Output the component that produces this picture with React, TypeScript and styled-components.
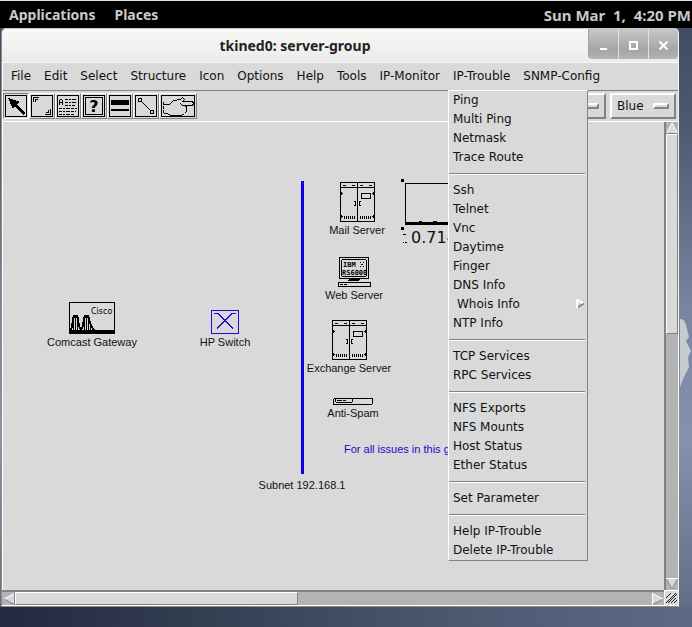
import React from "react";
import styled, { createGlobalStyle, css } from "styled-components";

const GlobalStyle = createGlobalStyle`
  * { box-sizing: border-box; }
  body { margin: 0; background: #4a566e; }
  button, select { font: inherit; color: inherit; margin: 0; }
`;

const face = "#d9d9d9";
const light = "#ffffff";
const shade = "#828282";
const trough = "#b3b3b3";

const raised = css`
  border-style: solid;
  border-color: ${light} ${shade} ${shade} ${light};
`;

/* ---------- desktop ---------- */

const Desktop = styled.div`
  position: relative;
  display: flex;
  flex-direction: column;
  min-height: 100vh;
  overflow: hidden;
  border-top: 1px solid #dfe3e3;
  background:
    linear-gradient(90deg, #23293f 0%, #343f52 30%, #4b5870 65%, #5c6a84 100%) bottom / 100% 20px no-repeat,
    linear-gradient(180deg, #3c485e 0%, #4d5a72 20%, #7886a2 50%, #8592ad 70%, #5c6a84 100%);
  color: #111;
  font-family: "DejaVu Sans", sans-serif;
  font-size: 12px;
`;

const Wallpaper = styled.svg`
  position: absolute;
  top: 312px;
  right: 0;
`;

const TopPanel = styled.header`
  display: flex;
  align-items: center;
  gap: 19px;
  height: 27px;
  padding: 0 1px 0 9px;
  background: #000;
  color: #c9c9c9;
  font: 700 14px/20px "Noto Sans", "Open Sans", sans-serif;
`;

const PanelButton = styled.button`
  padding: 0;
  border: 0;
  background: none;
`;

const Clock = styled.time`
  margin-left: auto;
  font-size: 15px;
  white-space: pre;
`;

/* ---------- window ---------- */

const Window = styled.main`
  position: relative;
  flex: 1;
  display: flex;
  flex-direction: column;
  margin: 0 13px 20px 1px;
  border: 1px solid #8d8d8d;
  border-top: 0;
  border-right-color: #f4f4f4;
  border-radius: 5px 5px 0 0;
  background: ${face};
`;

const TitleBar = styled.div`
  display: flex;
  align-items: flex-start;
  height: 35px;
  border-top: 1px solid #c9c9c9;
  border-bottom: 1px solid #f8f8f8;
  border-radius: 5px 5px 0 0;
  background: linear-gradient(#f8f8f7, #ebebea);
`;

const Title = styled.h1`
  flex: 1;
  margin: 0;
  color: #222;
  font: 700 14px/34px "Noto Sans", "Open Sans", sans-serif;
  text-align: center;
`;

const WindowButtons = styled.div`
  display: flex;
  height: 30px;
  overflow: hidden;
  border-radius: 0 4px 4px 4px;
`;

const WindowButton = styled.button`
  display: grid;
  place-items: center;
  width: 30px;
  padding: 2px 0 0;
  border: 0;
  border-left: 1px solid #e2e2e2;
  background: linear-gradient(#c8c8c8, #a5a5a5 70%, #b4b4b4);

  &:first-child { border-left-color: #a2a2a2; }
`;

const MenuBar = styled.nav`
  display: flex;
  height: 28px;
  padding: 0 2px;
  border-left: 1px solid ${light};
  border-bottom: 1px solid ${shade};
`;

const MenuSlot = styled.div`
  position: relative;
`;

const MenuTitle = styled.button`
  height: 27px;
  padding: 0 7px 2px 6px;
  border: 0;
  background: none;
  white-space: nowrap;
`;

const Popup = styled.div`
  position: absolute;
  z-index: 2;
  top: 27px;
  left: 1px;
  width: 140px;
  border-width: 1px;
  ${raised}
  background: ${face};
`;

const Item = styled.button<{ $indent?: boolean }>`
  display: flex;
  align-items: center;
  justify-content: space-between;
  width: 100%;
  height: 19px;
  padding: 0 2px 2px ${(p) => (p.$indent ? 8 : 4)}px;
  border: 0;
  background: none;
  white-space: nowrap;
`;

const Separator = styled.hr`
  height: 2px;
  margin: 6px 2px 6px 0;
  border: 0;
  border-top: 1px solid ${shade};
  border-bottom: 1px solid ${light};
`;

/* ---------- toolbar ---------- */

const ToolBar = styled.div`
  display: flex;
  align-items: center;
  height: 31px;
  padding: 0 2px 0 0;
  border-left: 1px solid ${light};
  border-bottom: 1px solid ${light};
`;

const Tool = styled.button<{ $active?: boolean }>`
  display: block;
  padding: 1px;
  border: 1px solid;
  border-color: ${(p) =>
    p.$active ? `${shade} ${light} ${light} ${shade}` : `${light} ${shade} ${shade} ${light}`};
  background: ${face};

  svg { display: block; }
`;

const Choices = styled.div`
  display: flex;
  gap: 4px;
  margin-left: auto;
`;

const Choice = styled.label`
  position: relative;
  display: flex;
  align-items: center;
  width: 66px;
  height: 26px;
  padding: 0 5px;
  border-width: 2px;
  ${raised}
`;

const ChoiceSelect = styled.select`
  flex: 1;
  min-width: 0;
  padding: 0;
  border: 0;
  appearance: none;
  background: none;
`;

const Indicator = styled.span`
  width: 16px;
  height: 6px;
  border-width: 2px;
  ${raised}
  pointer-events: none;
`;

/* ---------- work area and scrollbars ---------- */

const WorkArea = styled.div`
  flex: 1;
  display: grid;
  grid-template: minmax(0, 1fr) 16px / minmax(0, 1fr) 14px;
`;

const Canvas = styled.section`
  position: relative;
  overflow: hidden;
  border-left: 1px solid ${light};
  font: 11px/13px "Liberation Sans", Arial, sans-serif;
`;

const Scroll = styled.div<{ $vertical?: boolean }>`
  display: flex;
  flex-direction: ${(p) => (p.$vertical ? "column" : "row")};
  border: 0 solid ${shade};
  ${(p) =>
    p.$vertical
      ? css`border-left-width: 2px;`
      : css`border-top-width: 2px; border-bottom: 1px solid ${light}; padding-left: 1px;`}
  background: ${trough};
`;

const Arrow = styled.button`
  display: block;
  flex: none;
  padding: 0;
  border: 0;
  background: none;

  svg { display: block; }
`;

const Track = styled.div<{ $vertical?: boolean }>`
  flex: 1;
  display: flex;
  flex-direction: ${(p) => (p.$vertical ? "column" : "row")};
`;

const Thumb = styled.div<{ $share: number }>`
  flex: 0 0 ${(p) => p.$share}%;
  border-width: 1px;
  ${raised}
  background: ${face};
`;

const Corner = styled.div`
  border: 1px solid ${light};
  border-width: 1px 0 1px 1px;
  background: ${face};

  svg { display: block; }
`;

const Node = styled.figure<{ $x: number; $y: number; $gap?: number }>`
  position: absolute;
  left: ${(p) => p.$x - 53}px;
  top: ${(p) => p.$y}px;
  display: flex;
  flex-direction: column;
  align-items: center;
  gap: ${(p) => p.$gap ?? 2}px;
  width: 100px;
  margin: 0;
  white-space: nowrap;

  svg { display: block; }
`;

const Bus = styled.div`
  width: 3px;
  height: 293px;
  background: #1200ea;
`;

const Note = styled.p`
  position: absolute;
  left: 341px;
  top: 321px;
  margin: 0;
  color: #2108cf;
  white-space: nowrap;
`;

const Chart = styled.div`
  position: absolute;
  left: 398px;
  top: 57px;
  font: 16px/16px "DejaVu Sans", sans-serif;

  svg { display: block; }
`;

const ChartValue = styled.div`
  display: flex;
  align-items: center;
  gap: 4px;
  padding-left: 2px;
`;

/* ---------- drawings ---------- */

type ArtProps = { w: number; h: number; color?: string; children: React.ReactNode };

const Art = ({ w, h, color = "#000", children }: ArtProps) => (
  <svg width={w} height={h} viewBox={`0 0 ${w} ${h}`} fill="none" stroke={color} shapeRendering="crispEdges" aria-hidden="true">
    {children}
  </svg>
);

const ToolArt = ({ w = 22, children }: { w?: number; children: React.ReactNode }) => (
  <Art w={w} h={22}>
    <rect x=".5" y=".5" width={w - 1} height="21" />
    {children}
  </Art>
);

const tools = [
  {
    name: "Select",
    art: (
      <ToolArt>
        <path d="M3 3L15 7L12 9L20 18L18 20L10 11L8 14Z" fill="#000" stroke="none" />
      </ToolArt>
    ),
  },
  {
    name: "Resize",
    art: (
      <ToolArt>
        <path d="M2.500 7V2.500H8M4.500 7V4.500H7M19.500 14V19.500H14M17.500 15V17.500H15" />
      </ToolArt>
    ),
  },
  {
    name: "Text",
    art: (
      <ToolArt>
        <path d="M2.500 10V5M5.500 10V5M3 4.500H5M3 7.500H5" />
        <path d="M8 4.500H19M8 7.500H20M8 10.500H18M2 13.500H20M2 16.500H19M2 19.500H18" strokeDasharray="3 1 2 1 4 1" />
      </ToolArt>
    ),
  },
  {
    name: "Icon",
    art: (
      <ToolArt>
        <rect x="2.5" y="2.500" width="17" height="17" />
        <text x="11" y="17" textAnchor="middle" fill="#000" stroke="none" fontFamily="DejaVu Sans, sans-serif" fontWeight="700" fontSize="16">?</text>
      </ToolArt>
    ),
  },
  {
    name: "Network",
    art: (
      <ToolArt>
        <path d="M2 5H20V10H2ZM2 14H20V16H2Z" fill="#000" stroke="none" />
      </ToolArt>
    ),
  },
  {
    name: "Link",
    art: (
      <ToolArt>
        <path d="M3.500 3.500H6.500V6.500H3.500ZM15.500 15.500H18.500V18.500H15.500ZM7 7L15 15" />
      </ToolArt>
    ),
  },
  {
    name: "Reference",
    art: (
      <ToolArt w={34}>
        <path d="M2.500 7V19" strokeDasharray="3 1" />
        <path d="M3 9.500H8.500L12.500 5.500L19.500 4.500L21.500 2.500L23.500 4.500L21.500 6.500H31.500L32.500 8.500L31.500 10.500H24.500L25.500 12.500V16.500L23.500 18.500L20.500 20.500H9.500L6.500 18.500H3M19.500 8.500L21.500 10.500H24.500" />
      </ToolArt>
    ),
  },
];

const GatewayArt = () => (
  <Art w={46} h={32}>
    <rect x=".5" y=".5" width="45" height="31" />
    <path d="M1 28H46V32H1Z" fill="#000" stroke="none" />
    <path d="M1 29L3 25L4 17L5 14H8L9 17L10 24L12 28L14 24L15 17L16 14H19L20 17L22 24L25 28" strokeWidth="2" />
    <path d="M4.500 18V28M6.500 15V28M8.500 18V28M15.500 17V28M17.500 15V28M19.500 18V28M21.500 24V28" />
    <text x="22" y="12" fill="#000" stroke="none" fontFamily="DejaVu Sans, sans-serif" fontSize="8">Cisco</text>
  </Art>
);

const SwitchArt = () => (
  <Art w={28} h={24} color="#2108dc">
    <rect x=".5" y=".5" width="27" height="23" />
    <path d="M3 3.500H7L22 18.500M25 3.500H21L6 18.500" />
  </Art>
);

const CabinetArt = () => (
  <Art w={35} h={40}>
    <path d="M.5 .5H34.500V39.500H.5ZM0 5.500H35M17.500 0V40" />
    <path d="M3 3.500H6M12 3.500H15M20 3.500H23M29 3.500H32" />
    <path d="M1 11.500H3M1 34.500H3M32 11.500H34M32 34.500H34M1.500 10V13M1.500 33V36M33.500 10V13M33.500 33V36" />
    <rect x="21.5" y="11.500" width="9" height="5" />
    <path d="M14 19.500H15.500V23.500H14M21 19.500H19.500V23.500H21" />
    <path d="M4 35.500H16M20 35.500H32" strokeWidth="3" strokeDasharray="1 1" />
  </Art>
);

const TerminalArt = () => (
  <Art w={33} h={30}>
    <path d="M1.500 .5H30.500V21.500H1.500ZM4.500 2.500H27.500L28.500 3.500V18.500L27.500 19.500H4.500L3.500 18.500V3.500Z" />
    <path d="M11 22.500H22M10 23.500H21M.5 25.500H32.500V29.500H.5ZM2 27.500H5M6 27.500H9" />
    <g fill="#000" stroke="none" fontFamily="DejaVu Sans Mono, monospace" fontWeight="700" fontSize="7">
      <text x="5" y="10">IBM</text>
      <text x="4" y="18">RS6000</text>
    </g>
    <path d="M22 5.500H23M25 5.500H26M23 7.500H25M22 9.500H23M25 9.500H26" />
  </Art>
);

const ApplianceArt = () => (
  <Art w={40} h={7}>
    <rect x=".5" y=".5" width="39" height="6" rx="1.5" />
    <path d="M2.500 1V3.500L3.500 4.500H18.500L19.500 3.500V1M4 2.500H9M10 2.500H13" />
  </Art>
);

const ChartArt = () => (
  <Art w={80} h={51}>
    <path d="M0 0H3V3H0ZM0 48H3V51H0ZM4 43H80V46H4ZM18 42H21V43H18ZM32 42H36V43H32Z" fill="#000" stroke="none" />
    <path d="M4.500 45V4.500H80" />
  </Art>
);

const turns = { left: 0, up: 90, right: 180, down: 270 };

const ArrowArt = ({ dir }: { dir: keyof typeof turns }) => {
  const flip = dir === "right" || dir === "down";
  return (
    <svg width="12" height="12" viewBox="0 0 12 12" aria-hidden="true">
      <g transform={`rotate(${turns[dir]} 6 6)`}>
        <path d="M0 6L12 0V12Z" fill={face} />
        <path d="M1 6L11.500 .5" stroke={flip ? shade : light} />
        <path d="M1 6L11.500 11.500" stroke={dir === "left" || dir === "down" ? shade : light} />
        <path d="M11.500 0V12" stroke={flip ? light : shade} />
      </g>
    </svg>
  );
};

const SubmenuArt = () => (
  <svg width="9" height="9" viewBox="0 0 9 9" aria-hidden="true">
    <path d="M0 0L9 4.500L0 9Z" fill={face} />
    <path d="M1 8.500L8 4.500" stroke={shade} strokeWidth="2" />
    <path d="M1 9V1L7 4" fill="none" stroke={light} strokeWidth="2" />
  </svg>
);

/* ---------- data ---------- */

const menus = ["File", "Edit", "Select", "Structure", "Icon", "Options", "Help", "Tools", "IP-Monitor", "IP-Trouble", "SNMP-Config"];

const troubleGroups = [
  ["Ping", "Multi Ping", "Netmask", "Trace Route"],
  ["Ssh", "Telnet", "Vnc", "Daytime", "Finger", "DNS Info", "Whois Info", "NTP Info"],
  ["TCP Services", "RPC Services"],
  ["NFS Exports", "NFS Mounts", "Host Status", "Ether Status"],
  ["Set Parameter"],
  ["Help IP-Trouble", "Delete IP-Trouble"],
];

const nodes = [
  { label: "Comcast Gateway", x: 92, y: 180, art: <GatewayArt /> },
  { label: "HP Switch", x: 225, y: 188, art: <SwitchArt /> },
  { label: "Mail Server", x: 357, y: 60, art: <CabinetArt /> },
  { label: "Web Server", x: 354, y: 135, art: <TerminalArt /> },
  { label: "Exchange Server", x: 349, y: 198, art: <CabinetArt /> },
  { label: "Anti-Spam", x: 353, y: 276, art: <ApplianceArt /> },
];

const TroubleMenu = () => (
  <Popup role="menu" aria-label="IP-Trouble">
    {troubleGroups.map((group, i) => (
      <React.Fragment key={group[0]}>
        {i > 0 && <Separator />}
        {group.map((name) => {
          const nested = name === "Whois Info";
          return (
            <Item key={name} role="menuitem" $indent={nested} aria-haspopup={nested || undefined}>
              {name}
              {nested && <SubmenuArt />}
            </Item>
          );
        })}
      </React.Fragment>
    ))}
  </Popup>
);

export default function App() {
  return (
    <>
      <GlobalStyle />
      <Desktop>
        <Wallpaper width="12" height="84" viewBox="0 0 12 84" aria-hidden="true">
          <path d="M0 6Q4 5 6 12L9 24L6 28L11 38L8 44L9 54L4 64L0 74Z" fill="#c6cbcd" />
        </Wallpaper>
        <TopPanel>
          <PanelButton>Applications</PanelButton>
          <PanelButton>Places</PanelButton>
          <Clock>{"Sun Mar  1,  4:20 PM"}</Clock>
        </TopPanel>
        <Window>
          <TitleBar>
            <Title>tkined0: server-group</Title>
            <WindowButtons>
              <WindowButton aria-label="Minimize">
                <Art w={9} h={9} color="#fff"><path d="M1 8H8" strokeWidth="2" /></Art>
              </WindowButton>
              <WindowButton aria-label="Maximize">
                <Art w={9} h={9} color="#fff"><path d="M1 1H8V8H1Z" strokeWidth="2" /></Art>
              </WindowButton>
              <WindowButton aria-label="Close">
                <svg width="9" height="9" viewBox="0 0 9 9" stroke="#fff" strokeWidth="2" aria-hidden="true">
                  <path d="M.5 .5L8.500 8.500M8.500 .5L.5 8.500" />
                </svg>
              </WindowButton>
            </WindowButtons>
          </TitleBar>
          <MenuBar>
            {menus.map((name) => (
              <MenuSlot key={name}>
                <MenuTitle aria-haspopup="menu">{name}</MenuTitle>
                {name === "IP-Trouble" && <TroubleMenu />}
              </MenuSlot>
            ))}
          </MenuBar>
          <ToolBar>
            {tools.map((tool, i) => (
              <Tool key={tool.name} aria-label={tool.name} $active={i === 0}>
                {tool.art}
              </Tool>
            ))}
            <Choices>
              <Choice>
                <ChoiceSelect aria-label="Font" />
                <Indicator />
              </Choice>
              <Choice>
                <ChoiceSelect aria-label="Color" defaultValue="Blue">
                  <option>Blue</option>
                </ChoiceSelect>
                <Indicator />
              </Choice>
            </Choices>
          </ToolBar>
          <WorkArea>
            <Canvas aria-label="Network map">
              {nodes.map((n) => (
                <Node key={n.label} $x={n.x} $y={n.y}>
                  {n.art}
                  <figcaption>{n.label}</figcaption>
                </Node>
              ))}
              <Node $x={302} $y={59} $gap={5}>
                <Bus />
                <figcaption>Subnet 192.168.1</figcaption>
              </Node>
              <Chart>
                <ChartArt />
                <ChartValue>
                  <Art w={4} h={9}><path d="M0 .5H3M0 8.500H1M2 8.500H4" /></Art>
                  0.714
                </ChartValue>
              </Chart>
              <Note>For all issues in this gr</Note>
            </Canvas>
            <Scroll $vertical>
              <Arrow aria-label="Scroll up"><ArrowArt dir="up" /></Arrow>
              <Track $vertical><Thumb $share={45} /></Track>
              <Arrow aria-label="Scroll down"><ArrowArt dir="down" /></Arrow>
            </Scroll>
            <Scroll>
              <Arrow aria-label="Scroll left"><ArrowArt dir="left" /></Arrow>
              <Track><Thumb $share={44.5} /></Track>
              <Arrow aria-label="Scroll right"><ArrowArt dir="right" /></Arrow>
            </Scroll>
            <Corner>
              <svg width="13" height="14" viewBox="0 0 13 14" stroke="#222" aria-hidden="true">
                <path d="M1 7L6 2M1 12L11 2M6 12L11 7M3 12L12 3M9 12L12 9" />
              </svg>
            </Corner>
          </WorkArea>
        </Window>
      </Desktop>
    </>
  );
}
